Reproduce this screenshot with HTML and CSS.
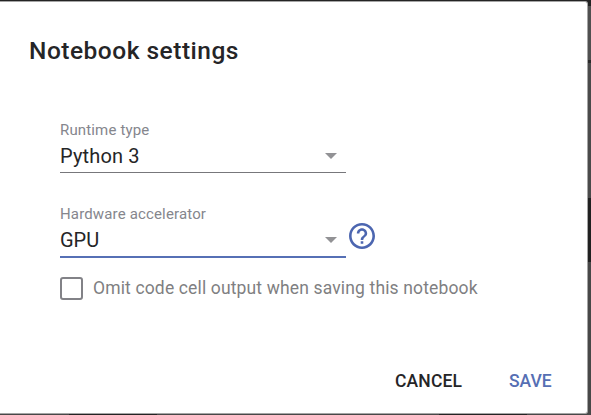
FILE: index.html
```
<!DOCTYPE html>
<html lang="en">
<head>
<meta charset="utf-8">
<title>Notebook settings</title>
<link rel="stylesheet" href="styles.css">
</head>
<body>
<main class="dialog">
  <h1 class="title">Notebook settings</h1>
  <div class="form">
    <div class="field">
      <div class="label">Runtime type</div>
      <div class="select"><span class="value-python">Python 3</span><svg class="arrow" viewBox="0 0 12 6"><path d="M0 0h12L6 6z"/></svg></div>
    </div>
    <div class="row">
      <div class="field focused">
        <div class="label">Hardware accelerator</div>
        <div class="select"><span>GPU</span><svg class="arrow" viewBox="0 0 12 6"><path d="M0 0h12L6 6z"/></svg></div>
      </div>
      <svg class="help" viewBox="2 2 20 20"><path d="M11 18h2v-2h-2v2zm1-16C6.480 2 2 6.480 2 12s4.480 10 10 10 10-4.480 10-10S17.520 2 12 2zm0 18c-4.410 0-8-3.590-8-8s3.590-8 8-8 8 3.590 8 8-3.590 8-8 8zm0-14c-2.210 0-4 1.790-4 4h2c0-1.100.9-2 2-2s2 .9 2 2c0 2-3 1.750-3 5h2c0-2.250 3-2.500 3-5 0-2.210-1.790-4-4-4z"/></svg>
    </div>
    <div class="check"><span class="box"></span><span class="omit">Omit code cell output when saving this notebook</span></div>
  </div>
  <div class="actions"><span class="cancel">CANCEL</span><span class="save">SAVE</span></div>
</main>
</body>
</html>
```
FILE: styles.css
```
* { box-sizing: border-box; }
body {
  margin: 0;
  width: 591px;
  height: 415px;
  padding-top: 1px;
  overflow: hidden;
  font-family: Roboto, "Liberation Sans", sans-serif;
  color: #252527;
  background:
    linear-gradient(#242424, #242424) 0 0 / 100% 1px no-repeat,
    linear-gradient(#242424, #242424) 69px 414px / 88px 1px no-repeat,
    linear-gradient(#242424, #242424) 439px 414px / 88px 1px no-repeat,
    linear-gradient(#232323 0 6px, #505050 6px 60px, #2a2a2a 60px 63px, #4a4a4a 63px 198px, #202020 198px 262px, #484848 262px);
}
.dialog {
  width: 588px;
  height: 413px;
  display: flex;
  flex-direction: column;
  background: #fff;
  border: 1px solid #a5a5a5;
  border-left: 0;
  border-radius: 0 3px 3px 0;
}
.title {
  margin: 34px 0 0 29px;
  font-size: 24.5px;
  line-height: 30px;
  font-weight: 500;
  letter-spacing: 0.5px;
  white-space: nowrap;
}
.form { margin: 53px 0 0 60px; }
.field { width: 286px; height: 54px; border-bottom: 1px solid #77777b; }
.label { padding-top: 1px; height: 20px; font-size: 15px; line-height: 20px; letter-spacing: 0.15px; color: #85868d; white-space: nowrap; }
.select {
  display: flex;
  align-items: center;
  justify-content: space-between;
  height: 33px;
  padding-right: 9px;
  font-size: 20px;
}
.value-python { letter-spacing: 0.15px; }
.arrow { width: 12px; height: 6px; fill: #929295; }
.row { display: flex; gap: 2.500px; margin-top: 30px; }
.focused { height: 55px; border-bottom: 2px solid #5670b5; }
.help { width: 26px; height: 26px; margin-top: 20px; fill: #4c66b0; }
.check { display: flex; align-items: center; gap: 10px; margin-top: 18px; height: 24px; }
.box { width: 23px; height: 23px; border: 2px solid #828287; border-radius: 3px; }
.omit { font-size: 17.5px; letter-spacing: 0.145px; color: #7f7f82; white-space: nowrap; }
.actions { display: flex; margin: 69px 0 0 395px; font-size: 17.5px; line-height: 24px; font-weight: 500; }
.cancel { width: 114px; letter-spacing: 0.15px; }
.save { color: #566fb4; }
```
